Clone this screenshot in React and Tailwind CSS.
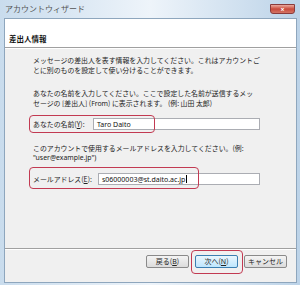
import React from "react";

const jp = { fontFamily: '"Noto Sans CJK JP", "Noto Sans", sans-serif' };
const lat = { fontFamily: '"Noto Sans", "Noto Sans CJK JP", sans-serif' };

function Btn({ children, primary }) {
  return (
    <div
      className={
        "flex h-[13px] w-[43px] items-center justify-center rounded-[2px] border text-[7px] leading-none text-[#222] " +
        (primary
          ? "border-[#3c7fb1] bg-gradient-to-b from-[#eaf6fd] to-[#bee6fd]"
          : "border-[#8a8a8a] bg-gradient-to-b from-[#f4f4f4] to-[#dcdcdc]")
      }
      style={jp}
    >
      {children}
    </div>
  );
}

export default function App() {
  return (
    <div
      className="flex h-[285px] w-[300px] flex-col bg-gradient-to-r from-[#c9dced] via-[#eef4fa] to-[#bcd3e8] pb-[2px] pl-[4px] pr-[3px]"
      style={jp}
    >
      {/* Title bar */}
      <div className="relative flex h-[18px] shrink-0 items-center pl-[1px]">
        <span className="text-[8px] leading-none text-[#555]">アカウントウィザード</span>
        <div className="absolute right-[2px] top-[4px] flex h-[10px] w-[25px] items-center justify-center rounded-b-[3px] border border-[#8a3b3b] bg-gradient-to-b from-[#e9a99f] via-[#c9493b] to-[#d27466]">
          <span className="text-[7px] font-bold leading-none text-white" style={lat}>
            ×
          </span>
        </div>
      </div>

      {/* Window body */}
      <div className="flex flex-1 flex-col border border-[#8ea6bd] bg-[#f0f0f0]">
        {/* Header */}
        <div className="h-[29px] shrink-0 border-b border-[#a0a0a0] bg-white pl-[4px] pt-[4px]">
          <span className="text-[7.5px] font-bold leading-none text-[#111]">差出人情報</span>
        </div>

        {/* Content */}
        <div className="flex-1 border-t border-white pl-[28px] pt-[6px] text-[6.9px] leading-[10px] text-[#222]">
          <div className="whitespace-nowrap">
            <div>メッセージの差出人を表す情報を入力してください。これはアカウントご</div>
            <div>とに別のものを設定して使い分けることができます。</div>
          </div>

          <div className="mt-[13px] whitespace-nowrap">
            <div>あなたの名前を入力してください。ここで設定した名前が送信するメッ</div>
            <div>
              セージの [差出人] (<span style={lat}>From</span>) に表示されます。 (例: 山田 太郎)
            </div>
          </div>

          <div className="relative mt-[9px] flex h-[12px] items-center">
            <div className="absolute left-[-4px] top-[-3px] h-[18px] w-[126px] rounded-[4px] border-[1.5px] border-[#c23a52]" />
            <span className="w-[60px] whitespace-nowrap">
              あなたの名前(<span className="underline">Y</span>):
            </span>
            <div
              className="flex h-[12px] w-[167px] items-center border border-[#abadb3] bg-white pl-[3px] text-[7px] leading-none text-[#111]"
              style={lat}
            >
              Taro Daito
            </div>
          </div>

          <div className="mt-[13px] whitespace-nowrap">
            <div>このアカウントで使用するメールアドレスを入力してください。(例:</div>
            <div style={lat}>"user@example.jp")</div>
          </div>

          <div className="relative mt-[10px] flex h-[12px] items-center">
            <div className="absolute left-[-4px] top-[-6px] h-[22px] w-[170px] rounded-[4px] border-[1.5px] border-[#c23a52]" />
            <span className="w-[65px] whitespace-nowrap">
              メールアドレス(<span className="underline">E</span>):
            </span>
            <div
              className="flex h-[12px] w-[162px] items-center border border-[#abadb3] bg-white pl-[3px] text-[7px] leading-none text-[#111]"
              style={lat}
            >
              s06000003@st.daito.ac.jp
              <span className="ml-[1px] inline-block h-[8px] w-px bg-black" />
            </div>
          </div>
        </div>

        {/* Footer */}
        <div className="h-[34px] shrink-0 border-t border-[#a0a0a0]">
          <div className="flex h-full items-start justify-end gap-[6px] border-t border-white pr-[9px] pt-[5px]">
            <Btn>
              戻る(<span className="underline" style={lat}>B</span>)
            </Btn>
            <div className="relative">
              <div className="absolute left-[-4px] top-[-5px] h-[24px] w-[52px] rounded-[4px] border-[1.5px] border-[#c23a52]" />
              <Btn primary>
                次へ(<span className="underline" style={lat}>N</span>)
              </Btn>
            </div>
            <Btn>キャンセル</Btn>
          </div>
        </div>
      </div>
    </div>
  );
}
